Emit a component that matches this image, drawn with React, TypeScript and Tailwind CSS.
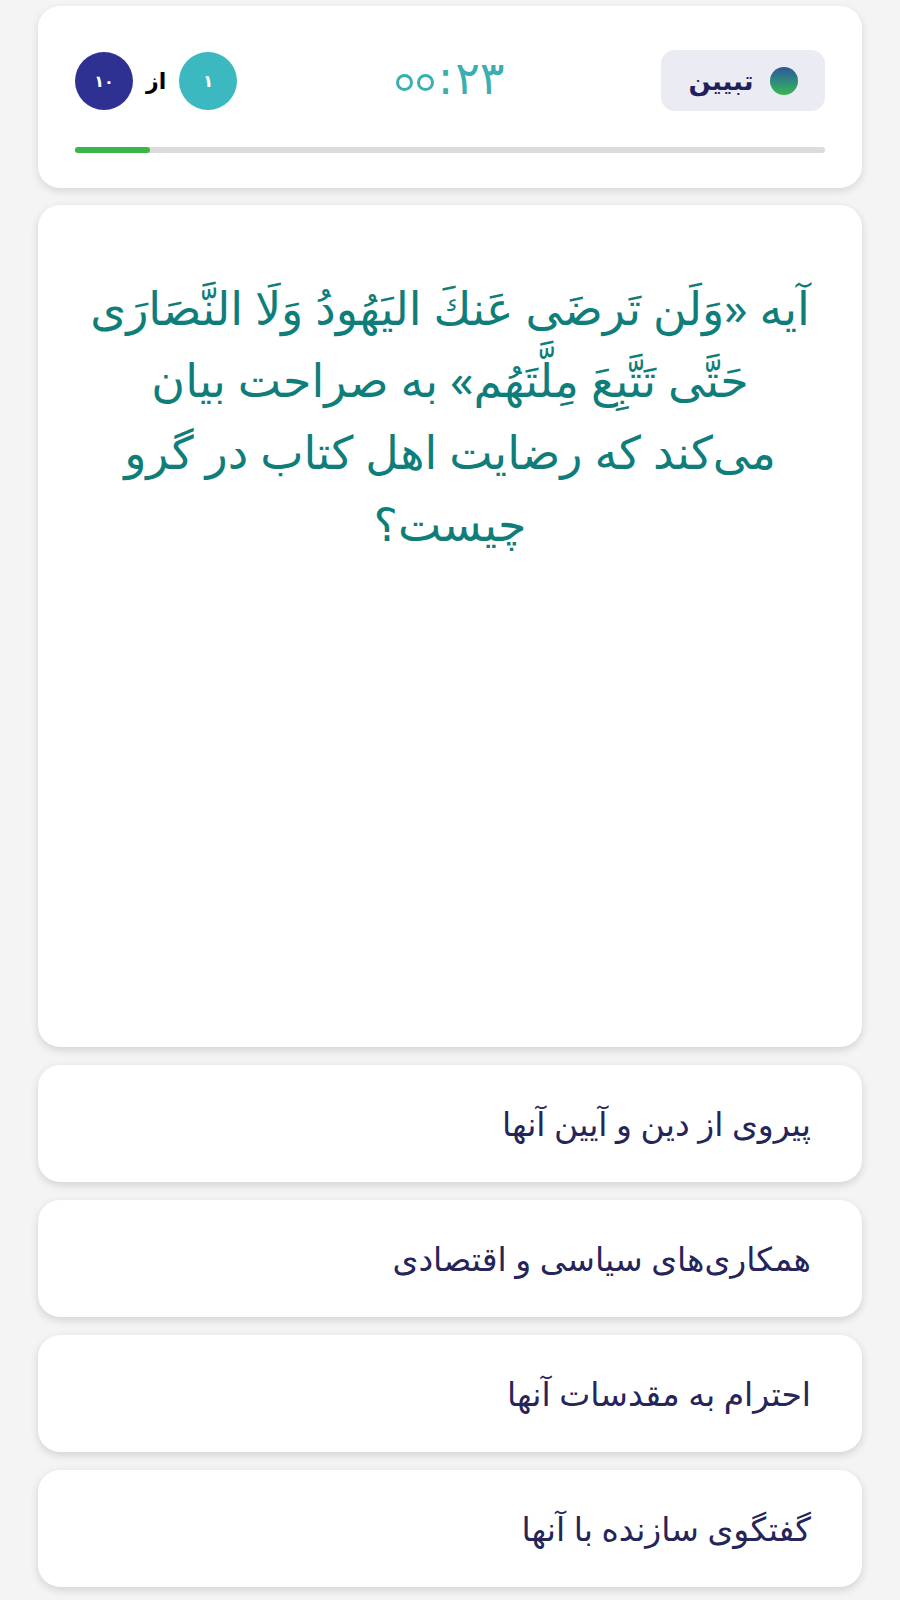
import React from 'react';

const options = [
  'پیروی از دین و آیین آنها',
  'همکاری‌های سیاسی و اقتصادی',
  'احترام به مقدسات آنها',
  'گفتگوی سازنده با آنها',
];

const questionLines = [
  'آیه «وَلَن تَرضَی عَنكَ الیَهُودُ وَلَا النَّصَارَی',
  'حَتَّی تَتَّبِعَ مِلَّتَهُم» به صراحت بیان',
  'می‌کند که رضایت اهل کتاب در گرو',
  'چیست؟',
];

const font = { fontFamily: '"Noto Sans", "DejaVu Sans", sans-serif' };

// Persian zero drawn as a small ring, like the app's font does
const Zero = () => (
  <span className="mx-[2px] mb-[10px] flex h-[17px] w-[17px] items-center justify-center rounded-full border-[3px] border-[#3aaeb0] text-[8px] leading-none text-transparent">
    ۰
  </span>
);

export default function App() {
  const current = 1;
  const total = 10;

  return (
    <div dir="rtl" style={font} className="min-h-screen bg-[#f4f4f5] px-[38px] pt-[6px] pb-4">
      {/* Header */}
      <div className="rounded-[22px] bg-white px-[37px] pt-[44px] pb-[35px] shadow-[0_3px_8px_rgba(0,0,0,0.12)]">
        <div className="flex h-[61px] items-center justify-between">
          <div className="flex h-[61px] w-[164px] items-center justify-center gap-4 rounded-[14px] bg-[#ebebf3]">
            <span className="h-[28px] w-[28px] rounded-full bg-gradient-to-b from-[#2f5596] to-[#3cb84c]" />
            <span className="text-[26px] font-bold text-[#1f1f5c]">تبیین</span>
          </div>

          <div
            dir="ltr"
            style={{ fontFamily: '"DejaVu Sans", sans-serif' }}
            className="mb-[6px] flex items-end text-[46px] leading-none text-[#3aaeb0]"
          >
            <Zero />
            <Zero />
            <span className="mx-[2px]">:</span>
            <span>۲۳</span>
          </div>

          <div className="flex items-center gap-[13px]">
            <div className="flex h-[58px] w-[58px] items-center justify-center rounded-full bg-[#3bb8c0] text-[17px] font-bold text-white">
              ۱
            </div>
            <span className="text-[22px] font-semibold text-black">از</span>
            <div className="flex h-[58px] w-[58px] items-center justify-center rounded-full bg-[#2e3192] text-[16px] font-bold text-white">
              ۱۰
            </div>
          </div>
        </div>

        <div dir="ltr" className="mt-[36px] h-[6px] w-full rounded-full bg-[#dcdcdc]">
          <div
            className="h-full rounded-full bg-[#3bb54a]"
            style={{ width: `${(current / total) * 100}%` }}
          />
        </div>
      </div>

      {/* Question */}
      <div className="mt-[17px] h-[842px] rounded-[22px] bg-white px-[20px] pt-[66px] shadow-[0_3px_8px_rgba(0,0,0,0.14)]">
        <p className="text-center text-[46px] leading-[72px] text-[#0f7e7a]">
          {questionLines.map((line) => (
            <span key={line} className="block whitespace-nowrap">
              {line}
            </span>
          ))}
        </p>
      </div>

      {/* Options */}
      <div className="mt-[18px] flex flex-col gap-[18px]">
        {options.map((opt) => (
          <button
            key={opt}
            className="flex h-[117px] w-full items-center rounded-[22px] bg-white px-[51px] text-right shadow-[0_3px_8px_rgba(0,0,0,0.14)]"
          >
            <span className="text-[33px] text-[#25255a]">{opt}</span>
          </button>
        ))}
      </div>
    </div>
  );
}
